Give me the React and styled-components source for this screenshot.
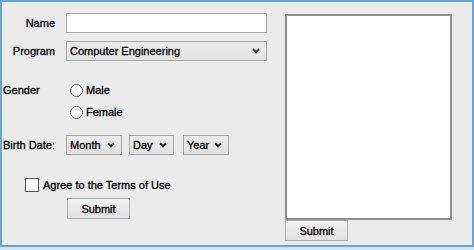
import React from "react";
import styled, { createGlobalStyle } from "styled-components";

const GlobalStyle = createGlobalStyle`
  html, body {
    margin: 0;
    padding: 0;
    background: #cfe3f3;
  }
  body {
    font-family: "Liberation Sans", Arial, sans-serif;
    font-size: 11px;
    color: #000;
    -webkit-text-stroke: 0.3px #000;
  }
`;

const Window = styled.div`
  box-sizing: border-box;
  width: 474px;
  height: 247px;
  border: 2px solid #5ea8dc;
  background: #ebebeb;
  display: flex;
  padding-left: 1px;
`;

const LeftPane = styled.div`
  width: 282px;
  display: flex;
  flex-direction: column;
`;

const RightPane = styled.div`
  display: flex;
  flex-direction: column;
  align-items: flex-start;
  padding-top: 12px;
`;

const Row = styled.div`
  display: flex;
  align-items: center;
  height: ${(p) => p.h || 20}px;
  margin-top: ${(p) => p.mt || 0}px;
  padding-left: ${(p) => p.pl || 0}px;
`;

const FieldLabel = styled.span`
  width: 52px;
  text-align: right;
  margin-right: 11px;
`;

const SideLabel = styled.span`
  width: ${(p) => p.w || 63}px;
`;

const TextInput = styled.div`
  box-sizing: border-box;
  width: 201px;
  height: 20px;
  background: #fff;
  border: 1px solid #a9a9a9;
`;

const Select = styled.div`
  box-sizing: border-box;
  width: ${(p) => p.w}px;
  height: 20px;
  margin-right: ${(p) => p.mr || 0}px;
  display: flex;
  align-items: center;
  justify-content: space-between;
  padding: 0 6px 0 3px;
  background: linear-gradient(#ececec, #e2e2e2);
  border: 1px solid #a6a6a6;
`;

const Chevron = () => (
  <svg width="8" height="6" viewBox="0 0 8 6">
    <path d="M1 1.2 L4 4.4 L7 1.2" fill="none" stroke="#111" strokeWidth="2" />
  </svg>
);

const Radio = styled.span`
  box-sizing: border-box;
  width: 13px;
  height: 13px;
  border-radius: 50%;
  border: 1px solid #555;
  background: #fff;
  margin-right: 3px;
`;

const Checkbox = styled.span`
  box-sizing: border-box;
  width: 14px;
  height: 14px;
  border: 1px solid #555;
  background: #fff;
  margin-right: 4px;
`;

const Button = styled.div`
  box-sizing: border-box;
  width: 63px;
  height: 21px;
  display: flex;
  align-items: center;
  justify-content: center;
  margin-left: ${(p) => p.ml || 0}px;
  margin-top: ${(p) => p.mt || 0}px;
  background: linear-gradient(#f1f1f1, #e1e1e1);
  border: 1px solid #adadad;
`;

const TextArea = styled.div`
  box-sizing: border-box;
  width: 167px;
  height: 206px;
  background: #fff;
  border: 2px solid #8d8d8d;
`;

export default function App() {
  return (
    <>
      <GlobalStyle />
      <Window>
        <LeftPane>
          <Row mt={11}>
            <FieldLabel>Name</FieldLabel>
            <TextInput />
          </Row>
          <Row mt={8}>
            <FieldLabel>Program</FieldLabel>
            <Select w={201}>
              Computer Engineering
              <Chevron />
            </Select>
          </Row>
          <Row mt={19}>
            <SideLabel w={67}>Gender</SideLabel>
            <Radio />
            Male
          </Row>
          <Row mt={2}>
            <SideLabel w={67} />
            <Radio />
            Female
          </Row>
          <Row mt={13}>
            <SideLabel>Birth Date:</SideLabel>
            <Select w={56} mr={7}>
              Month
              <Chevron />
            </Select>
            <Select w={45} mr={9}>
              Day
              <Chevron />
            </Select>
            <Select w={46}>
              Year
              <Chevron />
            </Select>
          </Row>
          <Row mt={22} h={16} pl={22}>
            <Checkbox />
            Agree to the Terms of Use
          </Row>
          <Button ml={64} mt={5}>
            Submit
          </Button>
        </LeftPane>
        <RightPane>
          <TextArea />
          <Button>Submit</Button>
        </RightPane>
      </Window>
    </>
  );
}
